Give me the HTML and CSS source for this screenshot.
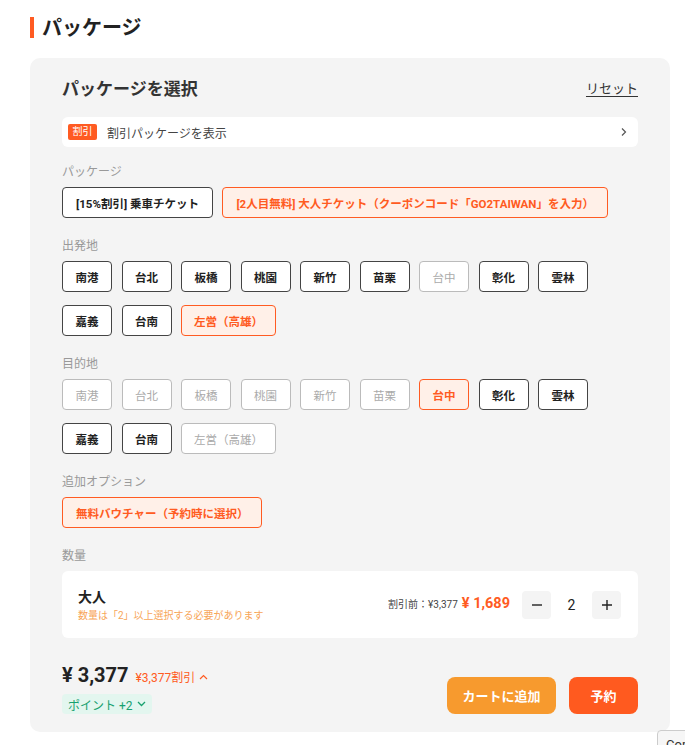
FILE: index.html
```html
<!DOCTYPE html>
<html lang="ja">
<head>
<meta charset="utf-8">
<link rel="stylesheet" href="styles.css">
</head>
<body>
<div class="page">
  <h2 class="section-title">パッケージ</h2>
  <div class="panel">
    <div class="panel-head">
      <h3 class="panel-title">パッケージを選択</h3>
      <a class="reset">リセット</a>
    </div>
    <div class="promo-row">
      <span class="promo-badge">割引</span>
      <span class="promo-text">割引パッケージを表示</span>
      <svg class="promo-chev" width="8" height="10" viewBox="0 0 8 10"><path d="M2 1.5 L5.5 5 L2 8.5" fill="none" stroke="#555" stroke-width="1.2"/></svg>
    </div>

    <div class="group">
      <div class="label">パッケージ</div>
      <div class="opts">
        <button class="opt">[15%割引] 乗車チケット</button>
        <button class="opt sel">[2人目無料] 大人チケット（クーポンコード「GO2TAIWAN」を入力）</button>
      </div>
    </div>

    <div class="group">
      <div class="label">出発地</div>
      <div class="opts">
        <button class="opt st">南港</button>
        <button class="opt st">台北</button>
        <button class="opt st">板橋</button>
        <button class="opt st">桃園</button>
        <button class="opt st">新竹</button>
        <button class="opt st">苗栗</button>
        <button class="opt st dis">台中</button>
        <button class="opt st">彰化</button>
        <button class="opt st">雲林</button>
        <button class="opt st">嘉義</button>
        <button class="opt st">台南</button>
        <button class="opt st sel">左営（高雄）</button>
      </div>
    </div>

    <div class="group">
      <div class="label">目的地</div>
      <div class="opts">
        <button class="opt st dis">南港</button>
        <button class="opt st dis">台北</button>
        <button class="opt st dis">板橋</button>
        <button class="opt st dis">桃園</button>
        <button class="opt st dis">新竹</button>
        <button class="opt st dis">苗栗</button>
        <button class="opt st sel">台中</button>
        <button class="opt st">彰化</button>
        <button class="opt st">雲林</button>
        <button class="opt st">嘉義</button>
        <button class="opt st">台南</button>
        <button class="opt st dis">左営（高雄）</button>
      </div>
    </div>

    <div class="group">
      <div class="label">追加オプション</div>
      <div class="opts">
        <button class="opt sel">無料バウチャー（予約時に選択）</button>
      </div>
    </div>

    <div class="group">
      <div class="label">数量</div>
      <div class="qty-card">
        <div class="qty-info">
          <div class="qty-name">大人</div>
          <div class="qty-warn">数量は「2」以上選択する必要があります</div>
        </div>
        <div class="qty-price">
          <span class="orig">割引前：¥3,377</span>
          <span class="now">¥ 1,689</span>
        </div>
        <div class="stepper">
          <button class="step">
            <svg width="12" height="12" viewBox="0 0 12 12"><path d="M1 6 H11" stroke="#222" stroke-width="1.4"/></svg>
          </button>
          <span class="count">2</span>
          <button class="step">
            <svg width="12" height="12" viewBox="0 0 12 12"><path d="M1 6 H11 M6 1 V11" stroke="#222" stroke-width="1.4"/></svg>
          </button>
        </div>
      </div>
    </div>

    <div class="footer">
      <div class="total">
        <div class="total-line">
          <span class="total-price">¥ 3,377</span>
          <span class="total-disc">¥3,377割引
            <svg width="9" height="6" viewBox="0 0 9 6"><path d="M1 5 L4.5 1.5 L8 5" fill="none" stroke="#ff5b22" stroke-width="1.2"/></svg>
          </span>
        </div>
        <div class="points">ポイント +2
          <svg width="9" height="6" viewBox="0 0 9 6"><path d="M1 1 L4.5 4.5 L8 1" fill="none" stroke="#18a16f" stroke-width="1.3"/></svg>
        </div>
      </div>
      <div class="actions">
        <button class="btn cart">カートに追加</button>
        <button class="btn book">予約</button>
      </div>
    </div>
  </div>
</div>
<div class="corner-btn">Copy</div>
</body>
</html>
```
FILE: styles.css
```css
* { box-sizing: border-box; }
html, body { margin: 0; padding: 0; background: #fff; }
body {
  font-family: Roboto, "Noto Sans CJK JP", "Noto Sans", sans-serif;
  color: #222;
  overflow: hidden;
  height: 745px;
}
.page { padding: 17px 15px 0 30px; }

.section-title {
  margin: 0;
  font-size: 20px;
  line-height: 26px;
  font-weight: 700;
  color: #222;
  border-left: 4px solid #ff5b22;
  padding-left: 8px;
  height: 21px;
  display: flex;
  align-items: center;
}

.panel {
  margin-top: 20px;
  background: #f4f4f4;
  border-radius: 10px;
  padding: 17px 32px 18px;
  width: 640px;
}
.panel-head {
  display: flex;
  justify-content: space-between;
  align-items: center;
  height: 24px;
}
.panel-title { margin: 0; font-size: 17px; font-weight: 700; color: #333; }
.reset {
  font-size: 13px;
  color: #333;
  text-decoration: underline;
  text-underline-offset: 3px;
}

.promo-row {
  margin-top: 18px;
  height: 30px;
  background: #fff;
  border-radius: 6px;
  display: flex;
  align-items: center;
  padding: 0 10px 0 6px;
}
.promo-badge {
  background: #ff5b22;
  color: #fff;
  font-size: 10px;
  height: 16px;
  line-height: 16px;
  padding: 0 4.5px;
  border-radius: 2px;
}
.promo-text { margin-left: 10px; font-size: 12px; color: #444; flex: 1; }

.group { margin-top: 14px; }
.group + .group { margin-top: 17px; }
.label { font-size: 12px; line-height: 17px; padding-top: 3px; color: #999; margin-bottom: 6px; }
.opts { display: flex; flex-wrap: wrap; column-gap: 9.5px; row-gap: 13px; }

.opt {
  font-family: inherit;
  height: 31px;
  padding: 0 13px;
  border: 1px solid #444;
  border-radius: 4px;
  background: #fff;
  color: #222;
  font-size: 11.5px;
  font-weight: 700;
  white-space: nowrap;
  cursor: pointer;
}
.opt.st { min-width: 50px; padding: 0 12px; }
.opt.sel { border-color: #ff5b22; background: #fff0e8; color: #ff5b22; }
.opt.dis { border-color: #bbb; color: #aaa; font-weight: 400; }

.qty-card {
  background: #fff;
  border-radius: 6px;
  height: 67px;
  display: flex;
  align-items: center;
  padding: 0 17px 0 16px;
}
.qty-info { flex: 1; }
.qty-name { font-size: 14px; font-weight: 700; color: #222; line-height: 20px; }
.qty-warn { font-size: 10px; color: #f7a557; line-height: 14px; margin-top: 2px; }
.qty-price { display: flex; align-items: baseline; gap: 4px; margin-right: 12px; margin-top: -2px; }
.orig { font-size: 10px; color: #444; }
.now { font-size: 14.5px; font-weight: 700; color: #ff5b22; }
.stepper { display: flex; align-items: center; }
.step {
  width: 29px;
  height: 28px;
  border: none;
  background: #f4f4f4;
  border-radius: 4px;
  display: flex;
  align-items: center;
  justify-content: center;
  padding: 0;
}
.count { width: 41px; text-align: center; font-size: 14px; color: #222; }

.footer {
  margin-top: 25px;
  display: flex;
  justify-content: space-between;
  align-items: flex-end;
}
.total-line { display: flex; align-items: baseline; gap: 7px; height: 28px; }
.total-price { font-size: 20px; font-weight: 700; color: #222; }
.total-disc { font-size: 12px; color: #ff5b22; display: inline-flex; align-items: center; gap: 4px; }
.points {
  margin-top: 3px;
  display: inline-flex;
  align-items: center;
  gap: 4px;
  height: 20px;
  padding: 0 6px 0 6px;
  background: #e3f6ef;
  color: #18a16f;
  font-size: 12px;
  border-radius: 4px;
}
.actions { display: flex; gap: 13px; }
.btn {
  font-family: inherit;
  height: 37px;
  border: none;
  border-radius: 8px;
  color: #fff;
  font-size: 13px;
  font-weight: 700;
}
.cart { width: 109px; background: #f79a2e; }
.book { width: 69px; background: #ff5a1f; }

.corner-btn {
  position: fixed;
  left: 657px;
  top: 730px;
  width: 60px;
  height: 30px;
  border: 1px solid #ccc;
  border-radius: 4px;
  background: #f6f6f6;
  font-size: 13px;
  padding: 6px 0 0 8px;
  color: #333;
}
```
